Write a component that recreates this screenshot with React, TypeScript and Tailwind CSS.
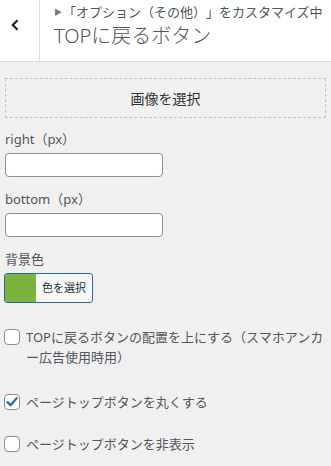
import React from "react";

const font = "font-['Noto_Sans','Noto_Sans_CJK_JP',sans-serif]";

function Checkbox({ checked }: { checked?: boolean }) {
  return (
    <span className="mt-[2px] flex h-[16px] w-[16px] shrink-0 items-center justify-center rounded-[4px] border border-[#8c8f94] bg-white">
      {checked && (
        <svg width="14" height="14" viewBox="0 0 14 14">
          <path d="M2.5 7.2 L5.6 10.2 L11.6 3.2" fill="none" stroke="#2271b1" strokeWidth="2.4" strokeLinecap="round" strokeLinejoin="round" />
        </svg>
      )}
    </span>
  );
}

export default function App() {
  return (
    <div className={`${font} h-[466px] w-[331px] overflow-hidden bg-[#f0f0f1] text-[#50575e] [text-spacing-trim:space-all]`}>
      {/* Header */}
      <div className="flex h-[62px] border-b border-[#dcdcde] bg-white">
        <div className="w-[40px] shrink-0 border-r border-[#dcdcde] pl-[11px] pt-[19px]">
          <svg width="8" height="12" viewBox="0 0 8 12">
            <path d="M6.5 1.2 L1.8 6 L6.5 10.8" fill="none" stroke="#1d2327" strokeWidth="2.2" />
          </svg>
        </div>
        <div className="min-w-0 flex-1 pl-[14px] pt-[2px]">
          <div className="flex items-center whitespace-nowrap text-[13px] leading-[20px]">
            <span className="mr-[1px] text-[8px] text-[#787c82]">▶</span>
            <span>「オプション（その他）」をカスタマイズ中</span>
          </div>
          <div className="whitespace-nowrap text-[20px] font-light leading-[28px]">TOPに戻るボタン</div>
        </div>
      </div>

      <div className="px-[5px]">
        {/* Image select */}
        <div className="mt-[16px] flex h-[40px] items-center justify-center border border-dashed border-[#c3c4c7] text-[14px] text-[#2c3338]">
          画像を選択
        </div>

        <div className="mt-[11px] text-[13px] leading-[20px]">right（px）</div>
        <input className="mt-[4px] block h-[24px] w-[158px] rounded-[4px] border border-[#8c8f94] bg-white" />

        <div className="mt-[12px] text-[13px] leading-[20px]">bottom（px）</div>
        <input className="mt-[4px] block h-[24px] w-[158px] rounded-[4px] border border-[#8c8f94] bg-white" />

        <div className="mt-[12px] text-[13px] leading-[20px]">背景色</div>
        <div className="mt-[4px] ml-[-1px] flex h-[30px] w-[89px] overflow-hidden rounded-[3px] border border-[#2c6aa0] bg-[#f6f7f7]">
          <span className="w-[31px] bg-[#7db23f]" />
          <span className="flex flex-1 items-center justify-center text-[11px] text-[#2c3338]">色を選択</span>
        </div>

        {/* Checkboxes */}
        <div className="mt-[24px] ml-[-1px] flex gap-[6px] text-[13px] leading-[20px]">
          <Checkbox />
          <span className="flex-1">
            <span className="whitespace-nowrap">TOPに戻るボタンの配置を上にする（スマホアンカ</span>
            <br />
            <span>ー広告使用時用）</span>
          </span>
        </div>
        <div className="mt-[25px] ml-[-1px] flex gap-[6px] text-[13px] leading-[20px]">
          <Checkbox checked />
          <span>ページトップボタンを丸くする</span>
        </div>
        <div className="mt-[22px] ml-[-1px] flex gap-[6px] text-[13px] leading-[20px]">
          <Checkbox />
          <span>ページトップボタンを非表示</span>
        </div>
      </div>
    </div>
  );
}
